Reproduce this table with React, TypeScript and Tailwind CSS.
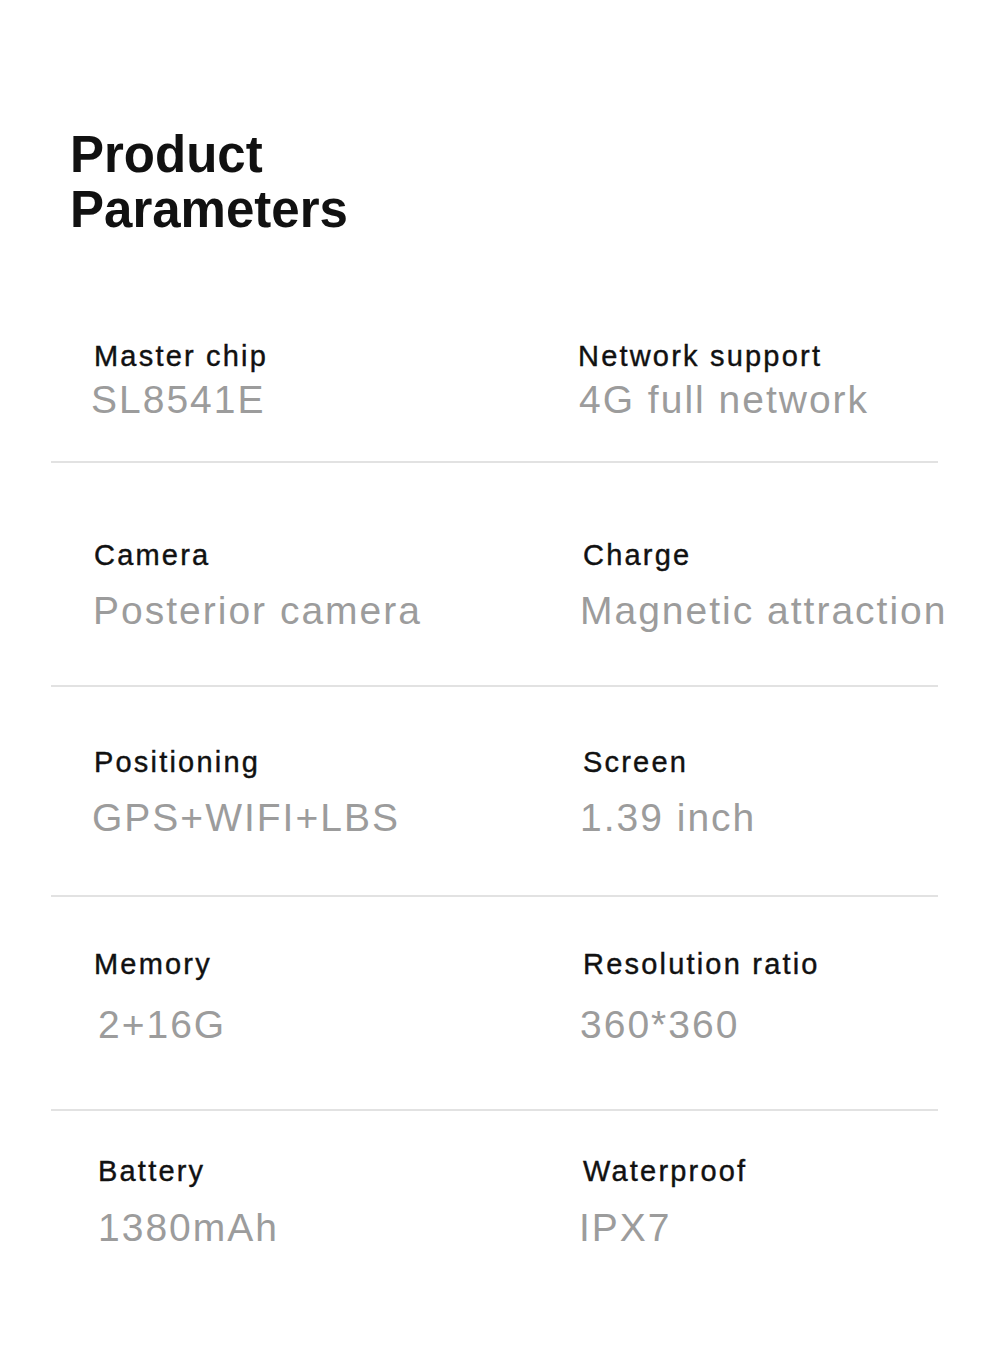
import React from "react";

type Cell = { label: string; value: string; lx: string; vx: string };
type Row = { left: Cell; right: Cell; pt: string; gap: string; pb: string; divider: boolean };

const rows: Row[] = [
  {
    left: { label: "Master chip", value: "SL8541E", lx: "ml-[43px]", vx: "ml-[40px]" },
    right: { label: "Network support", value: "4G full network", lx: "ml-[-4px]", vx: "ml-[-3px]" },
    pt: "pt-[103px]",
    gap: "mt-[6px]",
    pb: "pb-[39px]",
    divider: true,
  },
  {
    left: { label: "Camera", value: "Posterior camera", lx: "ml-[43px]", vx: "ml-[42px]" },
    right: { label: "Charge", value: "Magnetic attraction", lx: "ml-[1px]", vx: "ml-[-2px]" },
    pt: "pt-[76px]",
    gap: "mt-[18px]",
    pb: "pb-[52px]",
    divider: true,
  },
  {
    left: { label: "Positioning", value: "GPS+WIFI+LBS", lx: "ml-[43px]", vx: "ml-[41px]" },
    right: { label: "Screen", value: "1.39 inch", lx: "ml-[1px]", vx: "ml-[-2px]" },
    pt: "pt-[59px]",
    gap: "mt-[18px]",
    pb: "pb-[55px]",
    divider: true,
  },
  {
    left: { label: "Memory", value: "2+16G", lx: "ml-[43px]", vx: "ml-[47px]" },
    right: { label: "Resolution ratio", value: "360*360", lx: "ml-[1px]", vx: "ml-[-2px]" },
    pt: "pt-[51px]",
    gap: "mt-[23px]",
    pb: "pb-[62px]",
    divider: true,
  },
  {
    left: { label: "Battery", value: "1380mAh", lx: "ml-[47px]", vx: "ml-[47px]" },
    right: { label: "Waterproof", value: "IPX7", lx: "ml-[1px]", vx: "ml-[-3px]" },
    pt: "pt-[44px]",
    gap: "mt-[19px]",
    pb: "pb-[100px]",
    divider: false,
  },
];

function CellView({ c, gap }: { c: Cell; gap: string }) {
  return (
    <div className="flex flex-col">
      <div
        className={`text-[29px] leading-[32px] tracking-[2.2px] text-[#111111] whitespace-nowrap [-webkit-text-stroke:0.4px_#111111] ${c.lx}`}
      >
        {c.label}
      </div>
      <div className={`text-[39px] leading-[44px] tracking-[2px] text-[#9c9c9c] whitespace-nowrap ${c.vx} ${gap}`}>
        {c.value}
      </div>
    </div>
  );
}

export default function App() {
  return (
    <div
      className="w-[1000px] min-h-[1368px] bg-white"
      style={{ fontFamily: '"Liberation Sans", Arial, sans-serif' }}
    >
      <div className="pt-[127px] pl-[70px]">
        <h1 className="text-[51px] leading-[55px] font-bold text-[#111111]">
          Product
          <br />
          Parameters
        </h1>
      </div>
      <div className="ml-[51px] w-[887px]">
        {rows.map((r, i) => (
          <div key={i} className={r.divider ? "border-b-2 border-[#e2e2e2]" : ""}>
            <div className={`grid grid-cols-[531px_1fr] ${r.pt} ${r.pb}`}>
              <CellView c={r.left} gap={r.gap} />
              <CellView c={r.right} gap={r.gap} />
            </div>
          </div>
        ))}
      </div>
    </div>
  );
}
